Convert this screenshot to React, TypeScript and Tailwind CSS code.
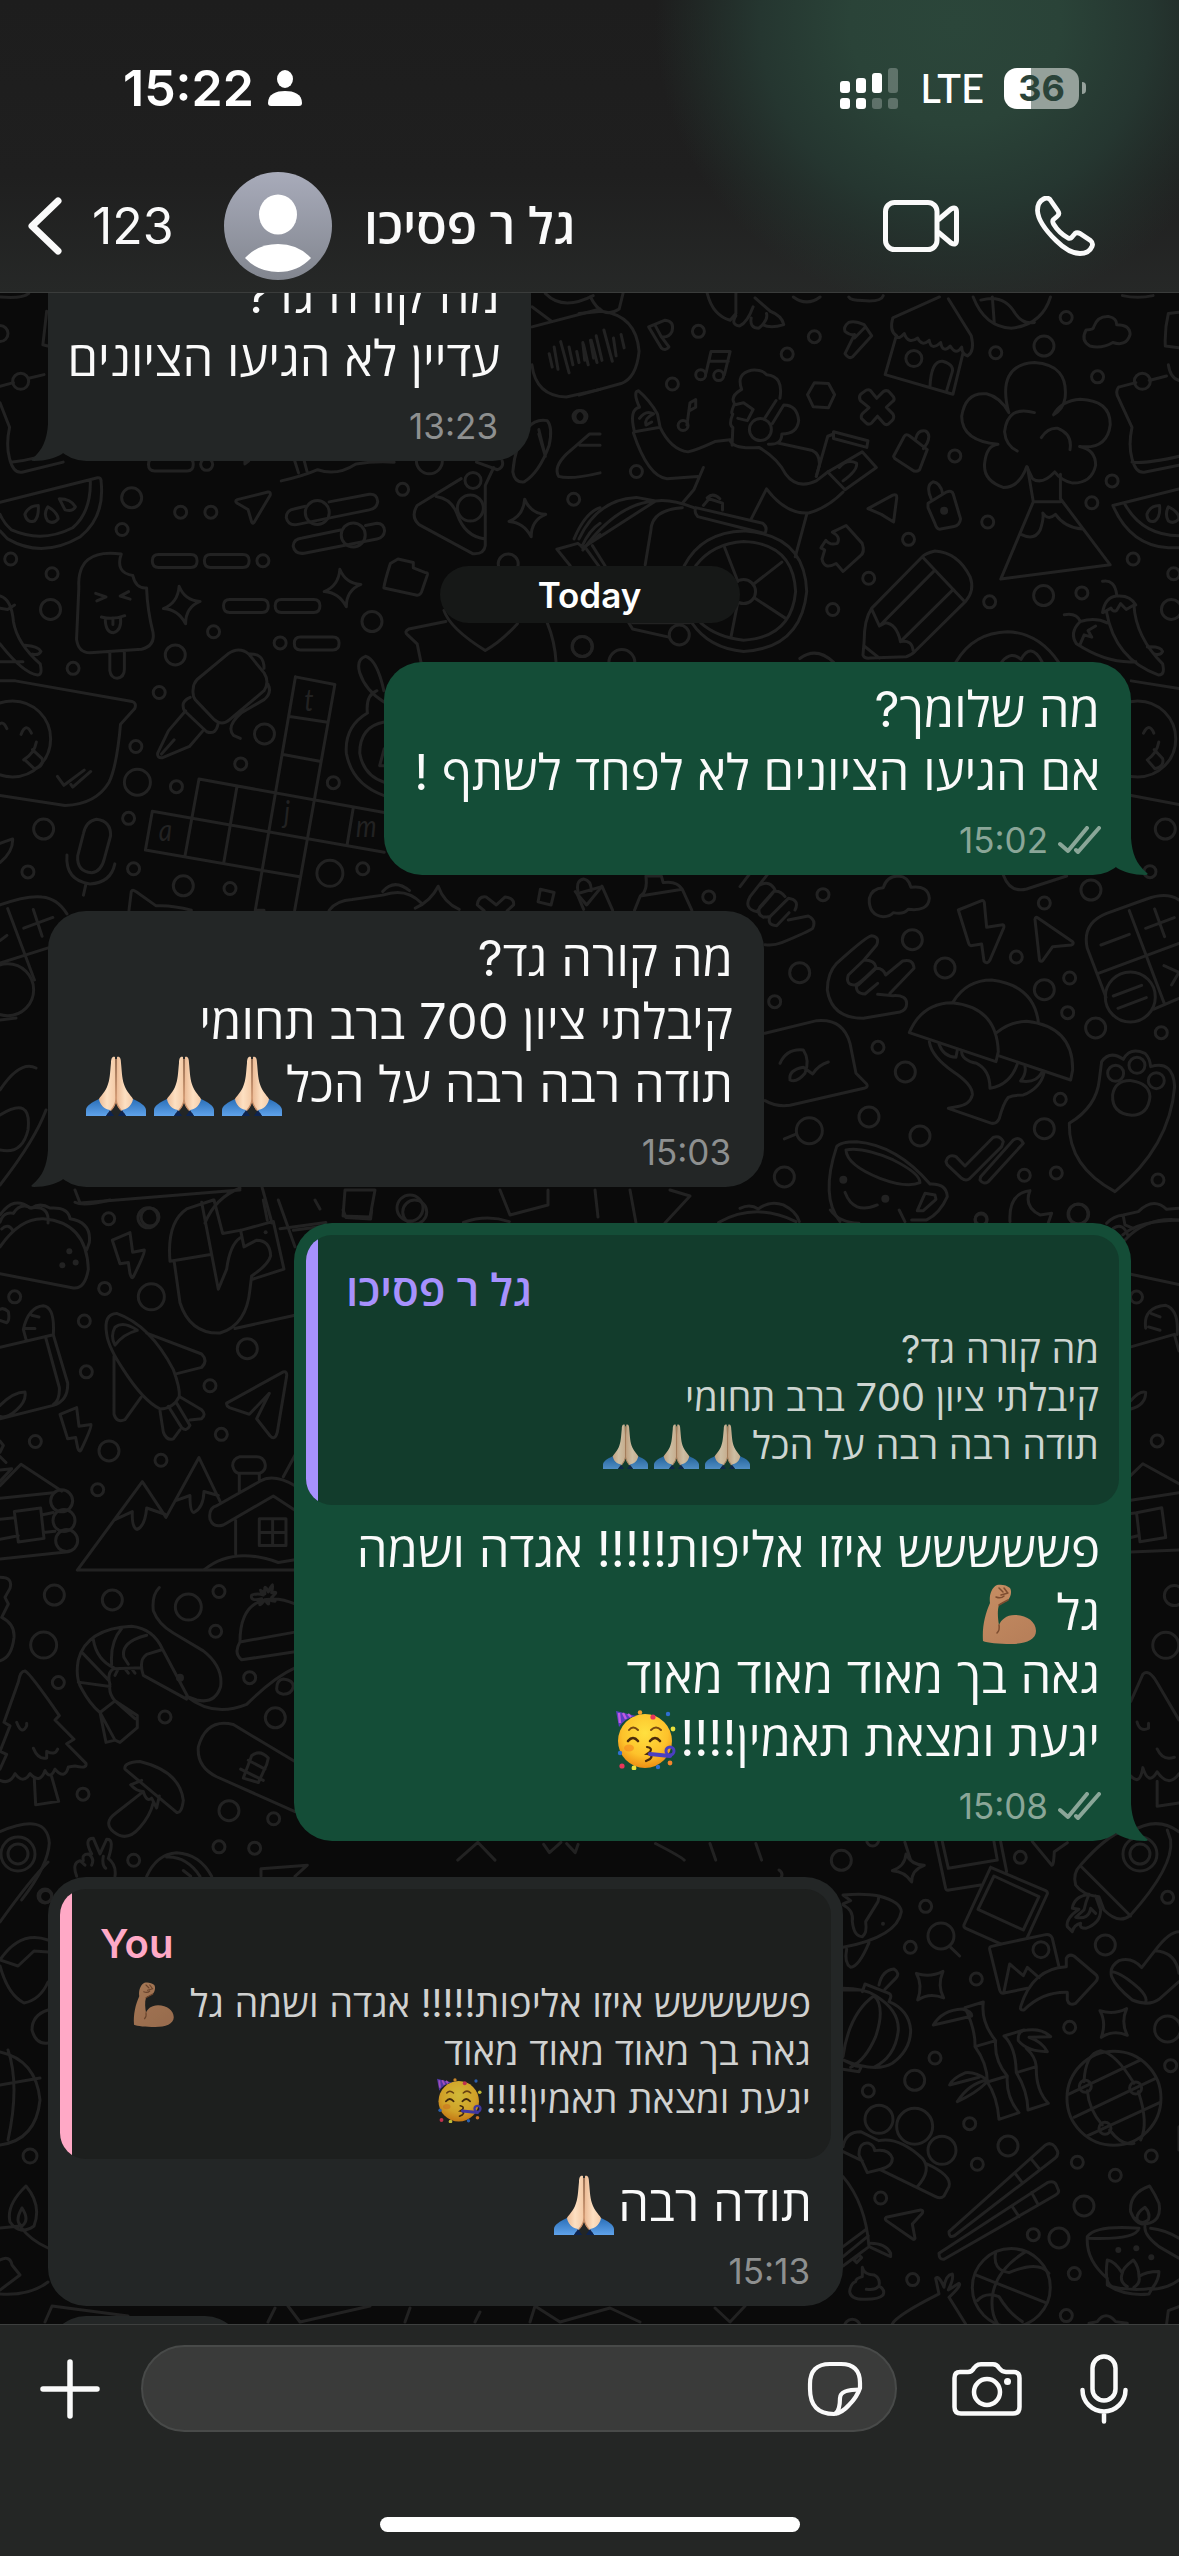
import React from "react";

type Dot = [number, number, number];

/* One region of the wallpaper. Its drawings share an origin and a unit size. */
function Patch({
  x,
  y,
  sx,
  sy,
  dots,
  paths,
  solid = [],
  children,
}: {
  x: number;
  y: number;
  sx: number;
  sy: number;
  dots: Dot[];
  paths: string[];
  solid?: Dot[];
  children?: React.ReactNode;
}) {
  return (
    <g transform={`translate(${x} ${y}) scale(${sx} ${sy})`}>
      {paths.map((d, i) => (
        <path key={i} d={d} vectorEffect="non-scaling-stroke" />
      ))}
      {dots.map(([cx, cy, r], i) => (
        <ellipse key={i} cx={cx} cy={cy} rx={r / sx} ry={r / sy} vectorEffect="non-scaling-stroke" />
      ))}
      {solid.map(([cx, cy, r], i) => (
        <ellipse key={i} cx={cx} cy={cy} rx={r / sx} ry={r / sy} fill="#222222" stroke="none" />
      ))}
      {children}
    </g>
  );
}

const star = (x: number, y: number) =>
  `M${x - 7} ${y - 42}Q${x + 8} ${y - 10} ${x + 48} ${y - 8}Q${x + 10} ${y + 5} ${x + 10} ${y + 42}Q${x - 10} ${y + 10} ${x - 48} ${y + 8}Q${x - 10} ${y - 5} ${x - 7} ${y - 42}Z`;

const star2 = (x: number, y: number) =>
  `M${x - 40} ${y - 36}Q${x} ${y - 22} ${x + 40} ${y - 42}Q${x + 22} ${y} ${x + 42} ${y + 38}Q${x} ${y + 20} ${x - 36} ${y + 44}Q${x - 20} ${y} ${x - 40} ${y - 36}Z`;

const capsule = (x: number, y: number) =>
  `M${x + 16} ${y}H${x + 101}Q${x + 117} ${y} ${x + 117} ${y + 14}Q${x + 117} ${y + 29} ${x + 101} ${y + 29}H${x + 16}Q${x} ${y + 29} ${x} ${y + 14}Q${x} ${y} ${x + 16} ${y}Z`;

function Wallpaper() {
  return (
    <svg
      className="absolute inset-0 h-full w-full"
      viewBox="0 293 1179 2031"
      preserveAspectRatio="xMidYMin slice"
      fill="none"
      stroke="#222222"
      strokeWidth={3}
      strokeLinecap="round"
      strokeLinejoin="round"
      aria-hidden="true"
    >
      <Patch
        x={0}
        y={280}
        sx={0.3827}
        sy={0.4464}
        dots={[
          [344, 488, 10], [472, 520, 6], [551, 520, 6], [540, 413, 6], [319, 559, 6], [28, 625, 6], [136, 658, 6],
          [132, 738, 10], [191, 870, 6], [458, 840, 10], [558, 788, 6], [416, 924, 6], [691, 1017, 10], [355, 1045, 6],
          [629, 1084, 6], [461, 1135, 6], [359, 1125, 13], [336, 1206, 6], [114, 1230, 10], [73, 1326, 6], [349, 1319, 6],
          [479, 1357, 10], [601, 1363, 6], [862, 1329, 13], [948, 1319, 6], [871, 1126, 6], [972, 765, 10], [732, 813, 6],
          [687, 629, 6], [1052, 469, 6], [1499, 491, 6], [1518, 306, 6], [1522, 821, 10], [1328, 636, 10], [0, 120, 8],
          [1122, 405, 13], [829, 521, 12], [923, 571, 12], [1236, 449, 8], [1229, 511, 13], [33, 1028, 38], [54, 227, 8],
          [20, 1590, 26],
        ]}
        paths={[
          "M0 238L35 230M75 220L115 212M0 275L25 330Q15 370 25 400Q35 435 60 430L165 408M28 408Q60 406 95 398M112 145L122 70M112 145L125 148",
          "M0 498L255 443Q264 442 264 450Q275 530 210 575Q110 625 20 580L0 562M236 450Q238 520 190 555Q110 590 30 560Q10 545 0 525",
          "M100 505Q102 530 90 540Q70 545 65 525Q75 505 100 505ZM125 508Q150 520 152 535Q140 548 125 540Q112 525 125 508ZM155 490Q185 490 197 508Q190 520 170 515Z",
          "M317 614Q200 600 206 690L200 805Q205 835 235 835L370 827Q405 820 400 790Q385 740 383 690Q355 692 347 662Q300 655 317 614ZM287 835V875Q290 892 306 892Q325 890 325 872V830",
          "M250 702L277 710L253 719M336 698L314 708L340 715M265 755Q295 762 326 752M275 757Q275 790 297 790Q318 785 315 757M295 757V772",
          "M700 475L620 492Q612 495 620 500L648 514L658 543Q661 548 666 540L706 482Q708 474 700 475Z",
          capsule(398, 615), capsule(534, 615), capsule(584, 716), capsule(719, 716), capsule(769, 800), capsule(388, 399),
          "M798 507L768 513Q748 516 748 532Q752 550 775 548L965 515Q985 512 987 496Q985 478 965 480L860 497M890 560L790 578Q767 580 766 596Q770 615 795 612L985 580Q1003 577 1005 562Q1003 545 985 545L955 550",
          star(475, 728), star(895, 690), star(1378, 533),
          "M772 889L875 906L770 1412M772 889L667 1412M757 978L852 990M740 1063L835 1078M520 1118L1004 1193M398 1190L1004 1282M398 1190L380 1277L783 1337M520 1118L483 1292M619 1136L585 1304M923 1183L907 1265M667 1412H690",
          "M505 915Q505 905 515 895L595 838Q625 820 650 838L690 880Q705 900 690 920L600 985Q580 1000 560 985L510 940Q502 930 505 915ZM497 935Q470 945 482 965L540 1012Q565 1020 570 993M485 965L440 1010L412 1060Q410 1072 425 1070L495 1045L530 1010M422 1062L455 1030M650 838Q690 835 690 870M700 905Q712 925 690 940L630 970Q590 1000 610 1020L628 1027",
          "M218 1240L203 1290Q200 1325 240 1328Q265 1325 273 1295L289 1245Q290 1212 252 1208Q225 1212 218 1240ZM175 1288Q170 1345 235 1353Q290 1350 300 1308M224 1355L218 1378",
          "M0 898H40L345 944Q358 948 352 960L315 995Q305 1090 285 1125Q250 1175 170 1177L0 1155M-10 1005Q5 980 18 1005M55 1018Q68 990 82 1015M62 1075Q90 1060 95 1035M65 1075L90 1095Q115 1090 110 1072L85 1052M150 1112L167 1132L220 1098M185 1130L190 1136L237 1101",
          "M0 708Q30 715 35 765Q45 815 105 860Q112 885 98 885Q60 880 0 815M65 818Q100 820 107 832Q100 842 85 838M0 855H60M0 735L20 738L38 728",
          "M1290 420L1268 460V595Q1265 615 1235 613L1095 548Q1072 530 1090 505L1205 445M1245 408L1300 425Q1318 418 1312 405M1140 485Q1180 490 1195 525Q1215 575 1268 580",
          "M1020 635Q1005 675 1003 690L1090 706Q1100 706 1103 695L1117 660Q1118 655 1110 655L1080 645V633L1040 625Z",
          "M1390 105L1568 65M1390 60L1440 92M1425 30Q1470 70 1550 35M1390 190Q1400 260 1480 262L1568 245M1435 165L1443 195M1448 150L1458 200M1465 138L1487 208M1487 150L1497 190M1507 160L1513 185M1525 145L1537 190M1545 135L1560 185",
          "M1340 430Q1345 370 1380 330Q1400 310 1430 315Q1445 330 1435 370Q1410 430 1370 452Q1345 455 1340 430ZM1408 335L1425 395L1408 345",
          "M1460 440Q1445 420 1480 390L1540 345H1568M1460 440Q1490 448 1568 432M1515 370H1568",
          "M1165 765L1068 782Q1055 788 1065 795L1090 815L1100 856M1160 740Q1175 780 1268 830Q1310 810 1352 770M1430 768Q1450 810 1453 856",
          "M1003 920Q985 850 955 843Q930 850 940 880Q955 920 1003 945M960 970Q955 930 985 920M960 970Q900 1000 905 1060Q920 1130 1004 1155M1004 990Q940 1000 940 1060Q950 1110 1004 1125M1004 1050L992 1088H1004",
          "M337 1412L343 1370Q346 1364 355 1370L408 1402Q450 1400 500 1412M860 1412Q880 1390 920 1388L1000 1378Q1060 1360 1100 1395M1000 1370Q1030 1340 1070 1368M1085 1407Q1125 1392 1145 1358Q1160 1395 1200 1410M1265 1413L1247 1400Q1250 1380 1270 1382L1297 1400L1320 1382Q1345 1385 1342 1400L1325 1413M1412 1365L1448 1372L1440 1400L1406 1393ZM1510 1368Q1505 1345 1525 1342Q1545 1345 1545 1368M1508 1375L1568 1360M1508 1375L1525 1410",
          "M0 1400Q70 1378 110 1382Q150 1385 175 1420M20 1408L90 1568M0 1530L130 1495M62 1452L138 1428M87 1410L110 1470M0 1480L18 1468",
          "M735 450Q790 440 830 425Q880 440 930 412Q980 405 1030 408M770 405L780 432M795 405L802 428M640 405V412L650 405",
          "M1490 640L1455 603L1510 590L1525 600L1568 570M1500 580Q1530 520 1568 510M1520 598Q1540 560 1568 545M1530 600L1568 645",
          "M0 38Q60 42 75 30M0 1305Q35 1280 33 1252L0 1262",
        ]}
      >
        <g fill="#222222" stroke="none" fontFamily="Lato, sans-serif" fontStyle="italic" fontSize={68}>
          <text x={795} y={966}>t</text>
          <text x={415} y={1256}>a</text>
          <text x={742} y={1216}>j</text>
          <text x={930} y={1248}>m</text>
        </g>
      </Patch>

      <Patch
        x={579}
        y={280}
        sx={0.3827}
        sy={0.4464}
        dots={[
          [312, 115, 6], [244, 233, 6], [544, 166, 6], [615, 127, 6], [150, 429, 6], [982, 394, 6], [1068, 542, 6],
          [861, 581, 6], [757, 668, 6], [663, 738, 6], [1073, 721, 6], [1214, 707, 10], [1314, 701, 6], [1215, 148, 10],
          [1089, 163, 6], [1273, 84, 6], [1355, 217, 6], [1393, 450, 6], [1340, 499, 6], [1448, 625, 6], [1548, 738, 10],
          [8, 821, 10], [112, 857, 13], [1554, 658, 6], [1532, 1230, 10], [318, 212, 5], [365, 214, 5], [272, 326, 5],
          [474, 335, 11], [430, 698, 12], [262, 795, 10], [875, 176, 8], [1472, 227, 8], [339, 1382, 6], [1460, 1028, 38],
          [0, 306, 6],
        ]}
        solid={[[954, 517, 4]]}
        paths={[
          "M0 75L60 70Q150 80 157 160Q150 220 110 232L0 258M10 140L15 180M30 135L38 175M45 125L60 180M65 112L87 182M90 130L97 170M110 122L118 152M30 38Q60 90 105 65L115 30",
          "M182 105L225 90Q250 92 243 115Q235 130 215 127L235 150Q225 160 215 152ZM198 100L215 127",
          "M332 208L345 160L395 160L380 212M340 182L390 182M282 325L290 275L305 268V285L290 292",
          "M335 30Q350 80 395 90L410 75V30M410 80Q395 100 420 103Q440 95 455 60M450 85Q445 108 470 108Q495 90 490 75M480 100Q500 110 535 100Q530 80 500 70L460 40",
          "M145 340Q130 290 158 285Q140 250 155 248Q185 270 205 300L212 330ZM158 310Q175 290 195 300Q170 310 175 325L190 318M212 330Q240 380 285 385Q310 380 355 362L395 358M142 342Q180 440 230 445L310 440M325 420L300 470L270 500",
          "M395 360Q405 380 470 375Q520 400 540 435Q570 470 620 450L650 430M520 365L610 382Q630 390 628 415L620 440M405 280Q395 300 402 300Q390 325 402 330L400 370M405 275Q395 260 425 245Q410 210 450 202Q480 200 490 212Q535 215 525 265M485 310L515 270M505 322L535 280Q570 280 574 315Q570 345 530 345Q530 370 495 368M405 280L430 275L455 290L440 315L415 310",
          "M620 440L650 350L665 345M665 340L755 360L752 375L665 355ZM650 430L740 385L777 420L695 470L650 430M680 420Q700 400 725 410Q730 425 690 450M450 535L490 468Q540 525 600 522Q650 510 690 475M595 525L565 620",
          "M305 510L480 545Q495 555 485 568L310 530Q300 520 305 510M325 505L340 490L375 500V515M335 488Q350 475 368 490M380 598L415 675M455 682L530 632M458 712L540 758M415 722L397 800",
          "M275 640Q320 565 430 562Q590 570 595 698Q580 825 430 832Q340 825 295 768M305 640Q350 590 430 586Q560 590 566 698Q555 800 430 807Q360 800 318 768",
          "M0 580Q50 490 150 487L200 495M10 605Q100 500 200 495M10 600L200 495Q240 490 300 510M270 510Q190 515 188 560L173 638M35 595L68 640M130 768L140 782L235 800M140 768L290 768",
          "M615 230L652 232L668 257L652 286L612 284L597 257Z",
          "M745 250Q755 243 762 248L778 265L795 250Q805 245 812 252L822 262Q826 270 818 273L803 285L820 300Q826 308 818 315L808 323Q800 326 795 320L780 305L765 320Q757 326 750 320L738 310Q736 303 742 298L758 286L735 270Q730 262 736 256Z",
          "M705 95Q690 105 695 115Q710 125 720 122L695 165Q705 178 715 172L765 125L745 100Q720 90 705 95ZM745 108L720 130",
          "M830 125Q810 115 820 85L942 38M965 42L1025 125Q1035 160 1015 170Q1000 165 1000 150Q985 170 970 148Q950 165 945 140Q920 160 915 135Q895 150 885 130Q860 145 850 120Q835 135 830 125M828 128L800 212L977 256L1003 165M917 240Q920 180 950 182Q985 190 973 212L960 250",
          "M1030 38Q1060 105 1130 108Q1210 100 1232 38M1080 38L1085 95M1050 45Q1110 30 1140 75Q1160 100 1190 95",
          "M560 38Q595 60 630 38M705 38Q710 46 740 46Q790 50 795 35M1420 35Q1460 42 1500 35",
          "M1335 148Q1310 135 1325 112Q1345 112 1345 105Q1355 80 1385 82Q1405 85 1405 100Q1440 100 1440 122Q1430 150 1395 140Q1365 155 1335 148Z",
          "M1123 297Q1090 190 1190 185Q1280 190 1270 265Q1265 290 1240 302Q1260 270 1310 267Q1390 270 1388 325Q1380 380 1308 373Q1350 380 1350 415Q1340 455 1290 455Q1260 450 1243 430Q1210 460 1185 445L1170 418Q1150 465 1110 465Q1055 450 1060 410Q1065 370 1095 368Q1000 360 1000 305Q1010 250 1065 255Q1100 262 1123 297M1190 297Q1120 280 1112 340Q1115 370 1145 383M1208 353Q1225 330 1250 332Q1290 345 1283 380",
          "M1172 420L1187 497L1102 670L1388 638L1258 490V435M1187 497H1258M1155 570Q1190 585 1205 560Q1215 535 1212 522Q1225 540 1245 525Q1270 555 1315 558",
          "M1410 240L1455 230M1490 225L1535 215M1410 240Q1400 250 1410 265L1445 330Q1435 370 1445 400Q1455 435 1480 430L1568 415M1445 408Q1480 412 1568 395M1540 190Q1545 220 1568 225M1568 72L1540 75Q1530 110 1532 148L1568 152",
          "M1395 505L1568 468M1395 505Q1440 595 1540 600H1568M1425 500Q1470 572 1568 573M1517 505Q1520 530 1505 540Q1485 545 1484 525Q1492 505 1517 505ZM1540 508Q1568 520 1568 535Q1555 548 1540 540Q1530 525 1540 508Z",
          "M1368 675Q1400 670 1405 705M1368 745Q1375 710 1405 708Q1440 705 1455 728M1370 745L1390 735Q1395 745 1405 740L1415 725L1430 738L1450 728Q1455 800 1525 860Q1532 885 1515 885Q1400 850 1378 742M1268 750Q1300 745 1310 765Q1280 790 1300 815Q1380 860 1455 855M1310 765Q1350 755 1380 768M1310 815L1320 795L1340 800L1330 785L1350 775M1485 822Q1520 820 1525 832Q1520 842 1505 838",
          "M897 620L765 735Q745 760 745 810L742 840Q745 848 760 847L855 844Q870 840 880 830L1010 720Q1035 695 1022 665Q990 610 930 607Q905 612 897 620ZM897 620L1005 718M930 650L785 775L765 738M978 693L840 810Q830 770 800 768L785 775M840 810Q870 805 873 830M745 820L785 847",
          "M632 600L645 583Q655 595 675 590Q685 575 662 565L698 550L740 590Q748 610 735 618L690 653L672 635Q640 650 635 625L642 605Z",
          "M755 512L820 482Q832 478 830 490L822 542L790 525Z",
          "M822 395L850 350Q855 343 865 350L910 380L890 425Q880 432 870 425L825 400ZM880 355Q885 335 905 338Q920 345 910 365L900 378M912 500L960 475Q975 470 978 480L997 535Q995 550 980 552L945 558Q935 560 930 545L912 510ZM920 490Q905 460 925 452Q945 455 950 478",
          "M985 856Q1030 790 1120 788Q1200 790 1253 856M1105 855Q1130 830 1155 850Q1180 810 1210 855M577 848Q620 820 665 856",
          "M1443 898L1568 915M1475 1015Q1490 990 1502 1015M1485 1075Q1510 1060 1515 1035M1485 1075L1505 1095Q1530 1090 1525 1072L1503 1052M1443 1155L1568 1175",
          "M-10 1370L20 1400L60 1358L88 1412M145 1412L160 1380L270 1365L295 1412M160 1380Q180 1370 175 1335H215L220 1350Q255 1345 270 1365",
        ]}
      />

      <Patch
        x={740}
        y={860}
        sx={0.3333}
        sy={0.3333}
        dots={[
          [249, 104, 6], [179, 338, 10], [104, 425, 6], [517, 239, 10], [615, 324, 10], [829, 291, 6], [913, 129, 6],
          [1053, 90, 10], [1230, 35, 6], [913, 389, 10], [989, 354, 6], [983, 458, 6], [1067, 504, 10], [1264, 518, 6],
          [414, 562, 6], [496, 636, 10], [387, 771, 10], [540, 828, 10], [208, 812, 13], [133, 951, 10], [961, 718, 6],
          [913, 806, 10], [853, 946, 6], [949, 939, 6], [1016, 1062, 10], [1254, 960, 6], [723, 1080, 6], [1127, 640, 8],
          [1191, 616, 8], [1249, 662, 8], [1171, 411, 25],
        ]}
        solid={[[310, 959, 4], [436, 1016, 4]]}
        paths={[
          "M0 80L30 40M85 40L30 110Q10 145 50 155Q90 110 105 90Q90 60 60 75M55 155Q60 175 85 170M135 110Q120 90 100 95L60 140Q50 160 70 172M165 150Q180 120 145 115L90 170Q80 195 110 197L147 158M145 180L205 168Q230 180 218 205Q205 215 125 248Q100 258 75 254",
          "M430 170Q385 165 388 115Q395 85 430 83Q440 48 475 48Q505 50 513 82Q565 75 568 115Q565 155 505 148Q490 165 460 158Q450 170 430 170Z",
          "M655 150L725 122Q732 120 733 128L740 202L788 194Q794 196 791 204L750 300Q742 315 732 303L725 252L692 257Q688 256 686 250Z",
          "M885 178Q886 168 894 174L998 245Q1003 252 994 255L938 260L908 302Q898 308 898 295Z",
          "M1317 120Q1280 95 1220 117L1100 160Q1025 190 1042 265L1098 412M1168 152L1272 428M1075 340L1317 250M1240 448L1317 415M1083 255L1168 223M1217 205L1303 173M1244 147L1274 230M1120 408L1205 376M1134 445L1219 413M1272 317L1317 337L1295 375",
          "M372 300L410 255Q420 230 395 227Q380 228 290 310Q262 340 262 390Q275 475 370 475L480 456Q500 450 500 430Q500 405 460 407L413 403M372 300L325 345Q315 375 345 375Q360 370 408 322Q405 300 372 300M410 325Q430 325 437 345L488 303Q520 295 522 325L450 400M350 375Q345 400 375 402L413 370M408 325L355 375",
          "M508 518Q545 430 635 428Q770 440 775 575L768 605ZM640 425Q680 360 755 360Q880 375 895 485M770 518Q810 485 860 484Q1000 500 998 630L992 660L775 587",
          "M568 545Q575 590 640 635Q700 675 697 705Q690 735 650 740L625 745L755 790Q770 792 778 775Q790 730 805 712Q820 705 850 705Q900 685 912 640M597 552Q610 590 648 592L652 570M665 575Q665 600 710 610Q750 630 750 685Q810 675 832 612M855 620Q860 640 842 663Q890 670 905 638",
          "M75 520L230 482Q310 475 330 550L348 640L380 672Q385 680 375 684L150 736Q110 742 75 722M120 610Q140 565 190 570Q210 600 195 640Q170 670 150 660Q145 630 190 622L218 642Q235 615 265 606M133 837L170 822",
          "M290 860Q300 845 350 845Q470 855 570 972Q620 970 622 1010Q600 1060 560 1080H515M290 860Q240 1010 300 1085M318 870Q370 860 460 900Q540 940 540 968Q500 985 420 955Q320 915 318 870ZM315 997Q340 1065 412 1035M555 1000L585 1005L588 1018L550 1052L532 1052Z",
          "M618 905Q625 880 648 890L675 918L760 832Q780 825 790 845L785 860L690 955Q678 965 665 955L622 915ZM722 950L820 840Q840 828 850 850L745 965Q730 975 720 960Z",
          "M810 1085Q805 1000 870 992Q850 1040 900 1065L935 1060L925 1088",
          "M988 790Q1070 740 1078 660L1085 605Q1110 570 1150 598Q1170 560 1215 580Q1230 595 1232 620Q1300 600 1304 680Q1290 860 1125 995Q985 920 988 790ZM1118 705Q1125 660 1175 662Q1228 670 1230 710Q1225 765 1175 766Q1115 760 1118 705Z",
          "M0 1045Q30 1030 55 1047Q90 1020 130 1035Q170 1055 178 1085M790 45Q810 100 860 87L980 48",
          "M1100 1090Q1120 1068 1150 1065L1195 1055Q1240 1010 1280 1048L1317 1045M1155 1140Q1220 1070 1317 1080M1150 1068L1155 1095L1180 1105M1120 1105Q1150 1085 1165 1130",
        ]}
      />

      <Patch
        x={0}
        y={1200}
        sx={0.3333}
        sy={0.4464}
        dots={[
          [326, 42, 6], [444, 40, 10], [314, 198, 6], [44, 217, 6], [454, 217, 13], [253, 271, 6], [259, 385, 6],
          [742, 333, 10], [630, 416, 6], [664, 525, 6], [106, 541, 6], [327, 562, 10], [483, 583, 6], [293, 649, 6],
          [163, 885, 10], [337, 896, 10], [565, 912, 13], [657, 877, 6], [647, 966, 6], [131, 997, 13], [175, 1081, 6],
          [749, 1070, 6], [495, 1158, 6], [826, 1160, 10], [249, 1331, 6], [687, 1368, 10], [821, 1386, 6], [657, 1449, 6],
          [764, 1452, 6], [401, 1479, 6], [137, 1560, 6], [185, 674, 11], [192, 718, 11], [200, 763, 11], [54, 1465, 17],
          [54, 1465, 10],
        ]}
        solid={[[208, 115, 3], [227, 140, 3], [187, 146, 3], [540, 1070, 4], [797, 72, 2]]}
        paths={[
          "M0 105Q60 40 130 42Q260 50 265 155Q255 200 220 197L0 165M0 50Q10 25 40 30Q60 5 95 18Q120 5 150 18Q205 15 210 42Q275 50 268 95L260 112M5 65Q25 50 40 70",
          "M337 90L390 73L398 117L433 112Q436 118 400 172Q395 178 390 165L385 140L360 143Z",
          "M510 137L632 122M510 137Q500 50 560 20L640 0M523 140L540 230Q570 300 660 298Q740 280 750 200L755 170M605 5L655 200L680 155Q690 100 720 85M642 0L668 75L720 68M722 68L820 48L852 155L755 178M722 68L732 105L770 90Q810 90 812 125Q805 145 755 170M790 0L802 45M835 0L885 105M705 288L885 258M945 0L960 20M880 68L960 60",
          "M0 330L160 302Q165 240 130 237Q85 240 70 290L78 312M95 258L117 262M75 288L105 288M160 302L203 410Q205 450 160 460L0 490M137 308L178 420Q180 450 160 458M0 460Q40 430 75 430Q80 450 50 470Q20 490 0 485M0 270L20 275Q30 270 25 250Q10 240 0 245",
          "M320 300Q310 255 350 254Q450 280 520 380Q540 420 538 440Q520 468 480 468Q430 450 370 380Q325 330 320 300ZM345 325Q330 305 345 285Q370 270 412 292Q370 300 345 325ZM440 298L605 345Q625 360 605 375L525 390M342 350V480Q350 500 375 492L423 442M480 472L490 520Q500 540 520 535L540 515M505 462L545 510Q560 520 570 505L530 455M538 440L605 470Q620 480 605 490L570 493",
          "M680 455L850 385Q862 383 860 395L832 520Q825 540 810 528L770 490L808 433L748 480L688 465Q678 460 680 455Z",
          "M180 480L230 465L237 507L273 503Q276 508 243 560Q238 566 233 555L227 532L203 535Z",
          "M0 640L63 592L185 652M0 668L160 656M0 715L45 712M128 705L160 700M0 760L55 752M130 745L165 742M0 804L205 788M43 698L122 690L132 758L55 766ZM0 605L35 602L0 630M0 575L18 588M0 540L10 550L0 565",
          "M232 829H885M232 829L427 631L498 711L597 577L662 678M345 716L397 698Q395 735 412 738Q435 730 440 690L495 704M525 674L570 662Q570 700 582 700Q610 690 612 653L655 662",
          "M630 715Q625 690 650 685L780 630Q820 612 885 640M630 715Q640 735 670 728L820 663L885 695M707 718V793M718 655V612M778 628V612M715 612H780Q800 605 795 590Q790 575 770 575H720Q698 580 698 595Q702 610 715 612M778 714H858V774H778ZM818 714V774M778 745H858M613 828Q700 775 835 812L885 806M850 620L885 572",
          "M0 845Q40 845 30 870L15 890L25 905L5 935Q45 950 42 980Q35 1025 0 1032",
          "M478 868Q455 885 460 920Q475 950 520 970L610 1010Q670 1045 662 1090Q645 1130 590 1120L560 1112M560 1112Q640 1160 740 1130Q820 1070 885 1048M560 1118L430 1065Q415 1030 440 1018L488 1007L565 1115M488 1007Q460 960 395 955Q260 960 235 1030Q225 1070 245 1095Q270 1130 300 1148L345 1122Q325 1105 330 1085Q320 1060 340 1050L425 1048M300 1148L318 1215L345 1210L360 1215L412 1182V1155L345 1122M300 1148L345 1210M345 1122L405 1162M248 1015L325 1075M235 1080L330 1090M280 985Q290 1030 342 1048M365 960Q330 990 335 1040M440 975Q360 990 372 1025L385 1040M355 1050L345 1065M375 1050L385 1060M395 1050L405 1060",
          "M885 905Q840 890 800 895Q720 905 720 990M720 990Q700 1015 725 1030L885 1012M720 990L885 968M755 885Q775 880 790 885Q770 865 795 882Q790 855 805 878Q825 845 815 880Q840 875 815 890Q840 905 805 895Q810 915 795 895Q770 920 785 893Q750 900 755 885Z",
          "M75 1055Q60 1055 55 1080L12 1170L30 1178L0 1235L20 1242L0 1275M75 1055Q90 1060 178 1155L165 1165L222 1208L200 1218L258 1262Q262 1275 225 1268L205 1270Q195 1300 165 1275Q150 1300 135 1278Q120 1310 90 1285Q70 1310 45 1285Q30 1310 0 1300M103 1298L107 1355L176 1347L155 1292M50 1170Q65 1200 80 1178V1172M100 1228Q115 1255 140 1250V1235Q165 1245 173 1230",
          "M375 1275Q370 1260 420 1258Q540 1280 550 1345Q545 1375 530 1372ZM392 1310L425 1300M392 1310Q410 1325 430 1325Q440 1350 455 1340L470 1362L478 1335M425 1328L345 1375Q310 1395 340 1415Q380 1440 420 1405Q450 1380 460 1350",
          "M885 1370L650 1292Q590 1270 595 1225Q620 1160 700 1175L885 1258M730 1295L755 1245Q780 1230 805 1250L800 1265L775 1305ZM722 1275L790 1300M745 1255L795 1275",
          "M830 1095Q830 1075 850 1073Q880 1075 880 1090Q875 1107 850 1107Q830 1105 830 1095Z",
          "M0 1415Q140 1370 148 1440Q145 1490 65 1568M230 1515Q215 1485 240 1480L255 1490M250 1480Q245 1465 265 1465Q285 1475 275 1490M275 1465Q250 1430 280 1430L300 1465L320 1432Q345 1430 325 1475Q350 1490 345 1515M310 1470Q305 1490 317 1497M440 1515Q470 1465 530 1462Q600 1465 635 1515M500 1472Q560 1470 600 1515M550 1502L572 1515M783 1515V1498L922 1490L885 1515M225 5Q250 15 330 0",
        ]}
      />

      <Patch
        x={779}
        y={1830}
        sx={0.3333}
        sy={0.3333}
        dots={[
          [187, 91, 10], [281, 30, 6], [724, 82, 6], [440, 229, 6], [486, 318, 13], [394, 352, 6], [592, 447, 6],
          [786, 359, 8], [979, 345, 10], [1166, 202, 6], [872, 592, 6], [1166, 597, 13], [1175, 707, 6], [468, 684, 6],
          [407, 751, 10], [268, 783, 6], [300, 868, 14], [407, 889, 18], [489, 961, 14], [572, 881, 6], [595, 1003, 6],
          [687, 948, 10], [895, 997, 6], [1117, 978, 6], [1009, 1036, 6], [915, 1128, 10], [305, 1104, 6], [763, 1214, 6],
          [840, 1224, 10], [401, 1349, 6], [886, 1331, 6], [862, 1457, 6], [1083, 72, 17], [1083, 72, 10], [1005, 805, 47],
          [697, 1373, 39], [919, 769, 6], [1070, 774, 6], [978, 895, 6], [220, 1492, 8],
        ]}
        solid={[[312, 281, 2], [1018, 1260, 3], [1072, 1255, 3], [1117, 1282, 3]]}
        paths={[
          star(388, 114), star2(452, 466), star2(1003, 578),
          "M470 35L500 175Q502 182 510 180L605 165M665 35L683 125M490 35L508 115L655 90L645 35M635 112L800 182Q808 186 804 194L745 322M635 112L555 285Q553 292 562 296L665 342M645 138L780 200L733 300L597 238ZM760 35L818 105Q824 110 826 65L865 38",
          "M667 342L635 350Q630 352 633 362L662 480Q665 492 675 489L745 475M667 342L800 314Q815 312 820 325L840 410M675 485L692 402L733 437L745 412L780 443",
          "M725 530Q760 415 862 410V385Q870 370 885 378L952 435Q960 445 950 455L890 520Q870 528 865 510V487Q790 485 735 540Q722 542 725 530Z",
          "M515 352L542 378M192 195Q260 190 300 198Q365 215 367 245Q355 320 192 352M192 225Q225 240 220 275Q225 320 250 320Q265 310 260 275L297 215L300 198M270 338Q240 410 215 412Q195 400 203 358M192 195L215 212L192 222",
          "M192 480L250 480M192 690Q290 730 340 700Q395 660 395 600Q390 540 330 515M192 475Q255 475 290 497Q360 540 358 600Q350 680 285 712M192 680Q210 550 285 497Q320 530 290 620Q260 690 215 712M250 485L258 462L330 490Q340 495 332 510M192 690L230 708L247 710L240 725L192 718M300 465Q310 420 345 417Q365 430 350 445L318 478",
          "M558 533L613 516Q605 575 650 632L588 650Q590 600 558 533M463 585Q490 540 550 537Q580 545 578 558Q530 570 463 585M650 632Q645 690 685 738L625 756Q625 700 588 650M685 738Q680 800 720 848L660 868Q655 800 625 756M625 750Q590 725 560 728Q520 745 512 765L600 742M625 750Q570 760 535 815Q590 790 620 760M675 618L735 600M675 618Q710 650 712 728L772 710Q770 680 742 655M772 710Q770 780 808 820L747 840Q745 780 712 728M718 632Q715 600 745 600Q790 595 815 620L750 622Q790 635 805 665Q745 665 718 632Z",
          "M905 105Q980 20 1035 0M905 105Q880 130 890 165Q910 195 960 200L975 240Q1020 285 1055 255Q1185 110 1175 30L1165 0M905 108L1055 258M930 193Q885 200 880 235L900 238Q860 265 865 290L880 305Q885 285 905 280Q900 295 920 295Q965 280 965 240L950 198M930 193Q920 215 915 240L890 262Q930 270 935 235L950 250",
          "M1200 305Q1170 305 1128 362L1088 413Q1060 380 1020 392Q990 410 998 440Q1010 470 1060 510Q1110 530 1140 508L1200 455M1000 425Q1030 430 1080 475Q1110 505 1098 520M1128 362Q1190 365 1200 430",
          "M868 793L1085 690M885 862L1130 745M925 918L1142 818M915 755Q920 670 965 662Q1010 670 1065 760M925 782Q930 840 970 885M1078 785Q1110 880 1085 930M992 900Q1030 950 1065 940",
          "M192 950Q200 905 245 905L295 930M192 965L250 993M300 932Q360 920 430 985Q460 1020 415 1070M440 1000Q520 1035 510 1070L495 1098Q485 1108 470 1100L305 1020M265 1028L240 975Q240 935 270 940Q285 945 287 962Q330 955 340 985Q340 1010 305 1018Z",
          "M510 1205L800 945Q815 935 828 950L835 962Q840 975 828 985L525 1218Q510 1225 510 1205ZM480 1270L805 1058Q825 1050 832 1065L838 1080Q842 1088 830 1095L495 1288Q480 1290 480 1270ZM755 985L782 1018M708 1030L730 1058M758 1088L778 1125M700 1130L720 1160",
          "M192 1040Q260 1120 270 1250M262 1198L192 1250M268 1218L192 1280M270 1250L192 1308M275 1240Q320 1240 335 1270V1280L275 1252M225 1290L240 1275L248 1283L233 1298Z",
          "M322 1162L425 1140Q434 1140 430 1150L400 1182L408 1225Q405 1232 398 1225L322 1172Q316 1166 322 1162Z",
          "M250 1312Q255 1335 285 1335Q305 1345 300 1368Q320 1380 312 1395Q300 1408 260 1408Q215 1410 212 1385Q215 1360 230 1355Q230 1345 250 1340ZM300 1368Q290 1382 262 1378",
          "M340 1482Q355 1455 480 1392L470 1345Q480 1335 495 1372Q500 1335 520 1332Q525 1345 508 1380L540 1360Q550 1365 510 1402L560 1482",
          "M590 1335L800 1418M650 1268Q640 1320 690 1328Q780 1290 810 1330M740 1265Q650 1320 640 1400Q635 1450 655 1480M595 1412Q620 1385 660 1400Q690 1450 730 1475",
          "M1080 1195Q950 1185 925 1220Q920 1290 985 1345M1080 1195Q1070 1230 930 1225M1098 1190Q1095 1215 1140 1250L1200 1285M1115 1195Q1160 1200 1200 1225M1112 1068Q1050 1090 1055 1145Q1070 1185 1100 1182Q1150 1175 1140 1120Q1130 1095 1112 1068ZM1098 1132Q1070 1150 1075 1170Q1090 1185 1108 1170Q1115 1150 1098 1132ZM985 1290Q975 1360 1000 1370Q1060 1385 1120 1375Q1140 1350 1140 1325Q1100 1325 1080 1340Q1080 1310 1063 1290Q1030 1315 1030 1330Q1010 1295 985 1290ZM985 1345V1365Q1040 1400 1110 1392L1118 1378Q1170 1375 1200 1350M1030 1330Q1020 1355 1045 1370M1080 1340Q1085 1360 1065 1372",
          "M1200 1430L1168 1442L1163 1482M930 1480L955 1475Q980 1440 1010 1475L1045 1480M1200 890V960M0 120Q15 130 5 145",
        ]}
      />

      <Patch
        x={280}
        y={1210}
        sx={0.5733}
        sy={0.4146}
        dots={[[1494, 210, 6], [1530, 557, 6], [1560, 930, 10], [1545, 1050, 13], [1223, 22, 6], [1392, 10, 10], [235, 5, 12]]}
        paths={[
          "M110 0L115 18L158 22L160 0M960 0Q975 30 1010 32M765 30Q830 -20 900 28M320 30Q360 10 400 28M0 45L80 30M1080 0L1090 28",
          "M1470 60Q1500 25 1568 25M1484 155L1568 180M1510 285Q1505 235 1545 230Q1568 240 1565 300M1520 250L1535 258M1515 282L1535 290M1484 330L1560 300L1568 340M1484 480Q1510 470 1510 440Q1500 435 1484 460",
          "M1484 640L1505 612L1568 660M1484 700L1568 682M1484 732L1495 730M1494 730L1538 718L1545 790L1500 800ZM1484 790L1498 785M1484 825L1568 820",
          "M1484 1185L1505 1120Q1515 1105 1530 1140L1568 1230M1495 1235Q1500 1260 1515 1250V1238M1530 1300Q1540 1330 1560 1320M1484 1365Q1500 1390 1505 1345Q1515 1390 1530 1355Q1550 1395 1568 1360M1530 1378V1438L1568 1430",
          "M1484 1500Q1530 1460 1568 1500",
          "M310 1568L345 1525L375 1568M460 1530L470 1550L490 1525M500 1528L515 1550L520 1530M655 1528Q700 1560 705 1568M750 1528L760 1568M830 1528L840 1568M1090 1525L1100 1568",
        ]}
      />

      <g>
        <path d="M0 1020L16 1018M0 1090Q20 1060 36 1068M0 1115Q32 1095 28 1130Q22 1155 0 1150M0 1185Q35 1140 46 1110M75 1190L80 1203L240 1190M0 1215Q14 1195 30 1208Q50 1205 48 1223M205 1223Q215 1198 240 1188M262 1187L272 1223M345 1190H375L370 1217L343 1216ZM500 1190L510 1215L548 1205V1190M595 1190L598 1217M630 1190L636 1223M665 1223L690 1196L670 1190" />
        <circle cx="410" cy="1208" r="13" />
        <circle cx="150" cy="1217" r="9" />
        <path d="M0 1922Q30 1880 48 1862M0 1960Q20 1930 48 1940M0 1960L18 1966L34 1951L48 1952M0 1966Q8 1995 24 2003Q40 2000 48 1982M0 2052Q36 2060 40 2100Q36 2140 0 2145M0 2085L40 2078M8 2050Q20 2085 8 2140M48 2010Q32 2015 32 2030Q36 2045 48 2043" />
        <circle cx="30" cy="2156" r="7" />
        <circle cx="45" cy="1896" r="7" />
        <path d="M26 2186Q6 2205 10 2222Q20 2236 34 2226Q42 2205 26 2186ZM22 2208Q14 2222 22 2226Q30 2220 22 2208M0 2228L20 2226Q30 2240 48 2248M0 2260Q10 2255 12 2265L20 2275L0 2290M0 2294Q30 2296 48 2282" />
        <path d="M45 2322L52 2306L128 2316M268 2322L275 2308M288 2306L300 2322L370 2306M405 2322L410 2308M475 2322L480 2312M530 2322L535 2306L560 2322L610 2308L640 2322M715 2308L730 2322L745 2306" />
      </g>
    </svg>
  );
}

/* ---------- emoji ---------- */

const emojiSize = {
  body: "inline-block h-[60px] w-[60px] mx-1 -mt-4 -mb-3.5 align-baseline",
  quote: "inline-block h-[45px] w-[45px] mx-[3px] -mt-3 -mb-2.5 align-baseline opacity-80",
};

type EmojiProps = { size: keyof typeof emojiSize };

function Pray({ size }: EmojiProps) {
  const id = React.useId();
  return (
    <svg className={emojiSize[size]} viewBox="0 0 60 60" role="img" aria-label="🙏🏻">
      <defs>
        <linearGradient id={id + "a"} x1="0" x2="1">
          <stop offset="0" stopColor="#eab791" />
          <stop offset="0.5" stopColor="#fde0c2" />
          <stop offset="1" stopColor="#f3c9a5" />
        </linearGradient>
        <linearGradient id={id + "b"} x1="0" y1="0" x2="0" y2="1">
          <stop offset="0" stopColor="#2a6fb8" />
          <stop offset="1" stopColor="#5fa2ea" />
        </linearGradient>
      </defs>
      <path d="M29 1C26 0 25 3 25 7C24 17 24 24 21 31C18 38 12 42 12 46L22 57C27 54 30 48 30 42Z" fill={`url(#${id}a)`} />
      <path d="M31 1C34 0 35 3 35 7C36 17 36 24 39 31C42 38 48 42 48 46L38 57C33 54 30 48 30 42Z" fill={`url(#${id}a)`} />
      <path d="M30 3V44Q29 50 25 54M30 44Q31 50 35 54" stroke="#c98f68" strokeWidth="1.4" fill="none" />
      <path d="M13 43C6 46 0 50 0 54V60H20L24 54C18 53 14 49 13 43Z" fill={`url(#${id}b)`} />
      <path d="M47 43C54 46 60 50 60 54V60H40L36 54C42 53 46 49 47 43Z" fill={`url(#${id}b)`} />
      <path d="M24 54L20 60H28ZM36 54L40 60H32Z" fill="#0c2351" />
    </svg>
  );
}

function Flex({ size }: EmojiProps) {
  const id = React.useId();
  return (
    <svg className={emojiSize[size]} viewBox="0 0 60 60" role="img" aria-label="💪🏽">
      <defs>
        <linearGradient id={id} x1="0" y1="0" x2="0.6" y2="1">
          <stop offset="0" stopColor="#c78e63" />
          <stop offset="1" stopColor="#b8805a" />
        </linearGradient>
      </defs>
      <path
        d="M18 1C22 0 28 1 31 4C33 7 32 13 29 16C26 19 22 18 20 21C18 27 19 35 20 41C22 36 27 31 36 31C48 31 57 38 57 47C57 56 46 60 32 60C20 60 8 59 4 57C3 43 6 30 11 19C10 12 12 4 18 1Z"
        fill={`url(#${id})`}
      />
      <path d="M20 21Q25 18 29 16M20 41Q21 46 18 49M20 4L24 8M25 4L28 8M22 11L29 9M17 13Q22 15 25 12" stroke="#7d4d30" strokeWidth="1.5" fill="none" strokeLinecap="round" />
    </svg>
  );
}

function Party({ size }: EmojiProps) {
  const id = React.useId();
  return (
    <svg className={emojiSize[size]} viewBox="0 0 60 60" role="img" aria-label="🥳">
      <defs>
        <radialGradient id={id} cx="0.5" cy="0.35" r="0.65">
          <stop offset="0" stopColor="#ffe03f" />
          <stop offset="0.65" stopColor="#fdc22b" />
          <stop offset="1" stopColor="#ee8f14" />
        </radialGradient>
      </defs>
      <circle cx="29" cy="31" r="27" fill={`url(#${id})`} />
      <path d="M0 1L3 17Q9 8 20 6Z" fill="#5b3fc4" />
      <path d="M3 3L4 13M7 3L10 9M12 4L15 7" stroke="#c15be0" strokeWidth="2.4" />
      <path d="M13 20Q17 15 22 20M35 20Q40 15 45 20" stroke="#7a4a10" strokeWidth="2" fill="none" strokeLinecap="round" />
      <path d="M12 31Q17 25 22 31M34 31Q39 25 44 31" stroke="#4a2a0a" strokeWidth="2.6" fill="none" strokeLinecap="round" />
      <ellipse cx="13" cy="38" rx="5" ry="3.5" fill="#f4801f" opacity="0.55" />
      <path d="M31 37Q37 38 34 42L31 44Q38 45 34 49L30 51" stroke="#4a2a0a" strokeWidth="2.2" fill="none" strokeLinecap="round" />
      <path d="M34 44L54 46" stroke="#4b3fc0" strokeWidth="4" strokeLinecap="round" />
      <circle cx="54" cy="41" r="4" fill="none" stroke="#4b3fc0" strokeWidth="3" />
      <circle cx="24" cy="2.5" r="2.2" fill="#f5a02c" />
      <circle cx="37" cy="7" r="2.6" fill="#e8365a" />
      <circle cx="52" cy="4" r="2.2" fill="#2f6fd0" />
      <circle cx="57" cy="19" r="2.4" fill="#e9e13c" />
      <circle cx="4" cy="43" r="2.2" fill="#2f6fd0" />
      <circle cx="6" cy="56" r="2.6" fill="#e8365a" />
      <circle cx="18" cy="58" r="2.4" fill="#e9e13c" />
      <circle cx="42" cy="57" r="2.2" fill="#2f6fd0" />
      <circle cx="54" cy="53" r="2.4" fill="#f5862c" />
    </svg>
  );
}

/* ---------- messages ---------- */

const cheer = "פ" + "ש".repeat(5);

function Tail({ side }: { side: "in" | "out" }) {
  return (
    <svg
      className={
        side === "out"
          ? "absolute -right-[17px] bottom-0 h-10 w-8 text-[#144d37]"
          : "absolute -left-[17px] bottom-0 h-10 w-8 -scale-x-100 text-[#232626]"
      }
      viewBox="0 0 32 40"
      fill="currentColor"
      aria-hidden="true"
    >
      <path d="M0 0H15V3C16 18 20 29 31 38Q33 40 29 40C17 40 8 37 1 33L0 32Z" />
    </svg>
  );
}

function Time({ children, sent }: { children: string; sent?: boolean }) {
  return (
    <div
      className={
        sent
          ? "mt-3.5 mb-[13px] flex h-11 items-center justify-end gap-2.5 pr-[30px] text-[35px] leading-10 text-[#8aa698]"
          : "mt-3.5 mb-[13px] flex h-11 items-center justify-end pr-[33px] text-[35px] leading-10 text-[#8e9090]"
      }
    >
      <time>{children}</time>
      {sent && (
        <svg className="h-7 w-[43px]" viewBox="0 0 43 28" fill="none" stroke="currentColor" strokeWidth="4" strokeLinecap="round" strokeLinejoin="round" role="img" aria-label="Delivered">
          <path d="M2 18L10 25L29 2M18 24L20 26L41 2" />
        </svg>
      )}
    </div>
  );
}

function Bubble({ side, className, tail = true, children }: { side: "in" | "out"; className: string; tail?: boolean; children?: React.ReactNode }) {
  return (
    <article
      className={
        (side === "out"
          ? "relative flow-root max-w-full shrink-0 self-end rounded-[38px] bg-[#144d37] "
          : "relative flow-root max-w-full shrink-0 self-start rounded-[38px] bg-[#232626] ") + className
      }
    >
      {children}
      {tail && <Tail side={side} />}
    </article>
  );
}

function Lines({ reply, children }: { reply?: boolean; children: React.ReactNode }) {
  return (
    <p
      dir="rtl"
      className={
        reply
          ? "pt-[13px] pr-[31px] pl-3 text-[49px] leading-[63px] text-[#fafafa]"
          : "pt-4 pr-[31px] pl-3 text-[49px] leading-[63px] text-[#fafafa]"
      }
    >
      {children}
    </p>
  );
}

function Quote({ side, name, children }: { side: "in" | "out"; name: string; children: React.ReactNode }) {
  return (
    <blockquote
      className={side === "out" ? "mx-3 flex overflow-hidden rounded-[26px] bg-[#123c2c]" : "mx-3 flex overflow-hidden rounded-[26px] bg-[#1d1f1e]"}
    >
      <div className={side === "out" ? "w-3 shrink-0 bg-[#a791fd]" : "w-3 shrink-0 bg-[#ffa9c6]"} />
      <div className="min-w-0 flex-1 pt-[30px] pr-5 pb-9 pl-7">
        <cite
          className={
            side === "out"
              ? "block text-[44px] leading-[50px] font-semibold text-[#a791fd] not-italic"
              : "block text-[40px] leading-[50px] font-semibold text-[#ffa9c6] not-italic"
          }
        >
          {name}
        </cite>
        <p dir="rtl" className={side === "out" ? "mt-2.5 text-[38px] leading-12 text-[#cdd5d1]" : "mt-2.5 text-[38px] leading-12 text-[#d0d1d0]"}>
          {children}
        </p>
      </div>
    </blockquote>
  );
}

function StatusBar() {
  return (
    <div className="flex h-12 items-center pr-[93px] pl-[123px]">
      <span className="text-[50px] leading-12 font-semibold">15:22</span>
      <svg className="ml-3.5 h-9 w-[34px]" viewBox="0 0 34 36" fill="currentColor" aria-hidden="true">
        <ellipse cx="17" cy="9" rx="8" ry="9" />
        <path d="M3 36Q0 36 0 33C0 24 8 21 17 21S34 24 34 33Q34 36 31 36Z" />
      </svg>
      <svg className="ml-auto h-[41px] w-[58px]" viewBox="0 0 58 41" fill="currentColor" role="img" aria-label="Signal">
        <rect y="13" width="10" height="12" rx="3" />
        <rect x="16" y="10" width="10" height="15" rx="3" />
        <rect x="32" y="5" width="10" height="20" rx="3" />
        <rect x="48" width="10" height="25" rx="3" opacity="0.25" />
        <rect y="30" width="10" height="11" rx="3" />
        <rect x="16" y="30" width="10" height="11" rx="3" />
        <rect x="32" y="30" width="10" height="11" rx="3" opacity="0.25" />
        <rect x="48" y="30" width="10" height="11" rx="3" opacity="0.25" />
      </svg>
      <span className="ml-[22px] font-['Lato',sans-serif] text-[40px] leading-12 font-medium">LTE</span>
      <div className="ml-5 flex h-[41px] w-[75px] items-center justify-center rounded-[13px] bg-[linear-gradient(90deg,#fff_36%,#95a19b_36%)] text-[36px] leading-10 font-bold text-[#2a4339]">
        36
      </div>
      <div className="ml-[3px] h-3 w-1 rounded-r-full bg-[#95a19b]" />
    </div>
  );
}

export default function App() {
  return (
    <div className="flex h-screen flex-col overflow-hidden bg-[#0a0a0a] font-['Inter','Open_Sans',sans-serif] text-white">
      <header className="shrink-0 border-b border-[#3a3c3b] bg-[radial-gradient(ellipse_300px_290px_at_81%_8%,#2b463a_0%,#2a4338_35%,#253630_65%,transparent_100%),linear-gradient(#1d1d1d,#1f1f1f_60%,#262827)] pt-16">
        <StatusBar />
        <div className="mt-[60px] mb-3 flex h-[108px] items-center pr-[84px] pl-7">
          <button className="flex items-center gap-[30px]" aria-label="Back, 123 unread">
            <svg className="h-[58px] w-[34px]" viewBox="0 0 34 58" fill="none" stroke="#fafafa" strokeWidth="7" strokeLinecap="round" strokeLinejoin="round" aria-hidden="true">
              <path d="M30 4L4 29L30 54" />
            </svg>
            <span className="w-20 text-left text-[50px] leading-[60px] text-[#fafafa]">123</span>
          </button>
          <svg className="ml-[52px] h-[108px] w-[108px] shrink-0" viewBox="0 0 108 108" role="img" aria-label="Profile photo">
            <defs>
              <linearGradient id="avatar" x1="0" y1="0" x2="0" y2="1">
                <stop offset="0" stopColor="#a8abba" />
                <stop offset="1" stopColor="#82868f" />
              </linearGradient>
            </defs>
            <circle cx="54" cy="54" r="54" fill="url(#avatar)" />
            <ellipse cx="54" cy="42.500" rx="19" ry="20" fill="#fff" />
            <path d="M21 86Q34 72 54 72T87 86Q74 100 54 100T21 86Z" fill="#fff" />
          </svg>
          <h1 className="ml-8 text-[50px] leading-[60px] font-semibold whitespace-nowrap text-[#fafafa]">גל ר פסיכו</h1>
          <button className="ml-auto" aria-label="Video call">
            <svg className="h-[52px] w-[76px]" viewBox="0 0 76 52" fill="none" stroke="#fafafa" strokeWidth="5" strokeLinejoin="round">
              <rect x="2.500" y="2.500" width="51.500" height="47" rx="9" />
              <path d="M55 20L68 9Q73.500 6 73.500 12V40Q73.500 46 68 43L55 32" />
            </svg>
          </button>
          <button className="ml-[76px]" aria-label="Voice call">
            <svg className="h-[60px] w-[60px]" viewBox="0 0 60 60" fill="none" stroke="#fafafa" strokeWidth="4.800" strokeLinejoin="round">
              <path d="M15 3.500L23 15Q25 18 22 20.500L18.500 23.500Q17 25 18.500 28Q24 37 33 42Q35.500 43 37 41L40 37.500Q42 36 45 37.500L55.500 44.500Q58.500 47 57 50.500Q54 57.500 45 57.500Q34 57.500 21 44.500Q3 27 2.500 14.500Q2.500 6 8.500 3Q12.500 1 15 3.500Z" />
            </svg>
          </button>
        </div>
      </header>

      <main className="relative flex-1 overflow-hidden">
        <Wallpaper />
        <div className="relative flex flex-col gap-9 px-12">
          <Bubble side="in" className="-mt-[45px] w-[483px]">
            <Lines>
              מה קורה גד?
              <br />
              עדיין לא הגיעו הציונים
            </Lines>
            <Time>13:23</Time>
          </Bubble>

          <div className="mt-[69px] flex h-[57px] w-[300px] items-center justify-center self-center rounded-full bg-[#161817] text-[35px] leading-10 font-semibold">
            Today
          </div>

          <Bubble side="out" className="mt-[3px] w-[747px]">
            <Lines>
              מה שלומך?
              <br />
              אם הגיעו הציונים לא לפחד לשתף !
            </Lines>
            <Time sent>15:02</Time>
          </Bubble>

          <Bubble side="in" className="w-[716px]">
            <Lines>
              מה קורה גד?
              <br />
              קיבלתי ציון 700 ברב תחומי
              <br />
              תודה רבה רבה על הכל
              <Pray size="body" />
              <Pray size="body" />
              <Pray size="body" />
            </Lines>
            <Time>15:03</Time>
          </Bubble>

          <Bubble side="out" className="w-[837px] pt-3">
            <Quote side="out" name="גל ר פסיכו">
              מה קורה גד?
              <br />
              קיבלתי ציון 700 ברב תחומי
              <br />
              תודה רבה רבה על הכל
              <Pray size="quote" />
              <Pray size="quote" />
              <Pray size="quote" />
            </Quote>
            <Lines reply>
              {cheer} איזו אליפות!!!!! אגדה ושמה
              <br />
              גל <Flex size="body" />
              <br />
              גאה בך מאוד מאוד מאוד
              <br />
              יגעת ומצאת תאמין!!!!
              <Party size="body" />
            </Lines>
            <Time sent>15:08</Time>
          </Bubble>

          <Bubble side="in" className="w-[795px] pt-3" tail={false}>
            <Quote side="in" name="You">
              {cheer} איזו אליפות!!!!! אגדה ושמה גל <Flex size="quote" />
              <br />
              גאה בך מאוד מאוד מאוד
              <br />
              יגעת ומצאת תאמין!!!!
              <Party size="quote" />
            </Quote>
            <Lines reply>
              תודה רבה
              <Pray size="body" />
            </Lines>
            <Time>15:13</Time>
          </Bubble>

          <Bubble side="in" className="-mt-[26px] h-24 w-[195px]" tail={false} />
        </div>
      </main>

      <footer className="h-[232px] shrink-0 border-t border-[#3d3f3e] bg-[#242625]">
        <div className="mt-5 flex h-[87px] items-center pr-[51px] pl-10">
          <button aria-label="Attach">
            <svg className="h-[60px] w-[60px]" viewBox="0 0 60 60" stroke="#fafafa" strokeWidth="5.500" strokeLinecap="round">
              <path d="M30 3V57M3 30H57" />
            </svg>
          </button>
          <div className="ml-[41px] flex h-[87px] min-w-0 flex-1 items-center rounded-full border-2 border-[#484a49] bg-[#3a3b3a] pr-8">
            <input aria-label="Message" className="h-full min-w-0 flex-1 bg-transparent pl-8 text-[47px] outline-none" />
            <button aria-label="Stickers">
              <svg className="h-14 w-14" viewBox="0 0 56 56" fill="none" stroke="#fafafa" strokeWidth="4.200" strokeLinejoin="round">
                <path d="M27 53Q3 53 3 28V23Q3 3 23 3H34Q53 3 53 22V27Q50 36 42 44Q35 52 27 53Z" />
                <path d="M53 28.500Q33 28.500 33 37Q33 50 28 53" />
              </svg>
            </button>
          </div>
          <button className="ml-[55px]" aria-label="Camera">
            <svg className="h-[54px] w-[70px]" viewBox="0 0 70 54" fill="none" stroke="#fafafa" strokeWidth="4.500" strokeLinejoin="round">
              <path d="M8 10H16Q20 10 22 6L24 4Q26 2.300 29 2.300H41Q45 2.300 47 6Q50 10 54 10H62Q67.500 10 67.500 16V45Q67.500 51.500 61 51.500H9Q2.500 51.500 2.500 45V16Q2.500 10 8 10Z" />
              <circle cx="35" cy="30" r="13" />
              <circle cx="55.500" cy="19.500" r="3.500" fill="#fafafa" stroke="none" />
            </svg>
          </button>
          <button className="ml-[58px]" aria-label="Voice message">
            <svg className="h-[70px] w-12" viewBox="0 0 48 70" fill="none" stroke="#fafafa" strokeWidth="4.500" strokeLinecap="round">
              <rect x="12.500" y="2.500" width="23" height="44" rx="11.500" />
              <path d="M2.500 36V36A21.500 21.500 0 0 0 45.500 36M24 58V67.500" />
            </svg>
          </button>
        </div>
        <div className="mx-auto mt-[85px] h-[15px] w-[420px] rounded-full bg-white" />
      </footer>
    </div>
  );
}
